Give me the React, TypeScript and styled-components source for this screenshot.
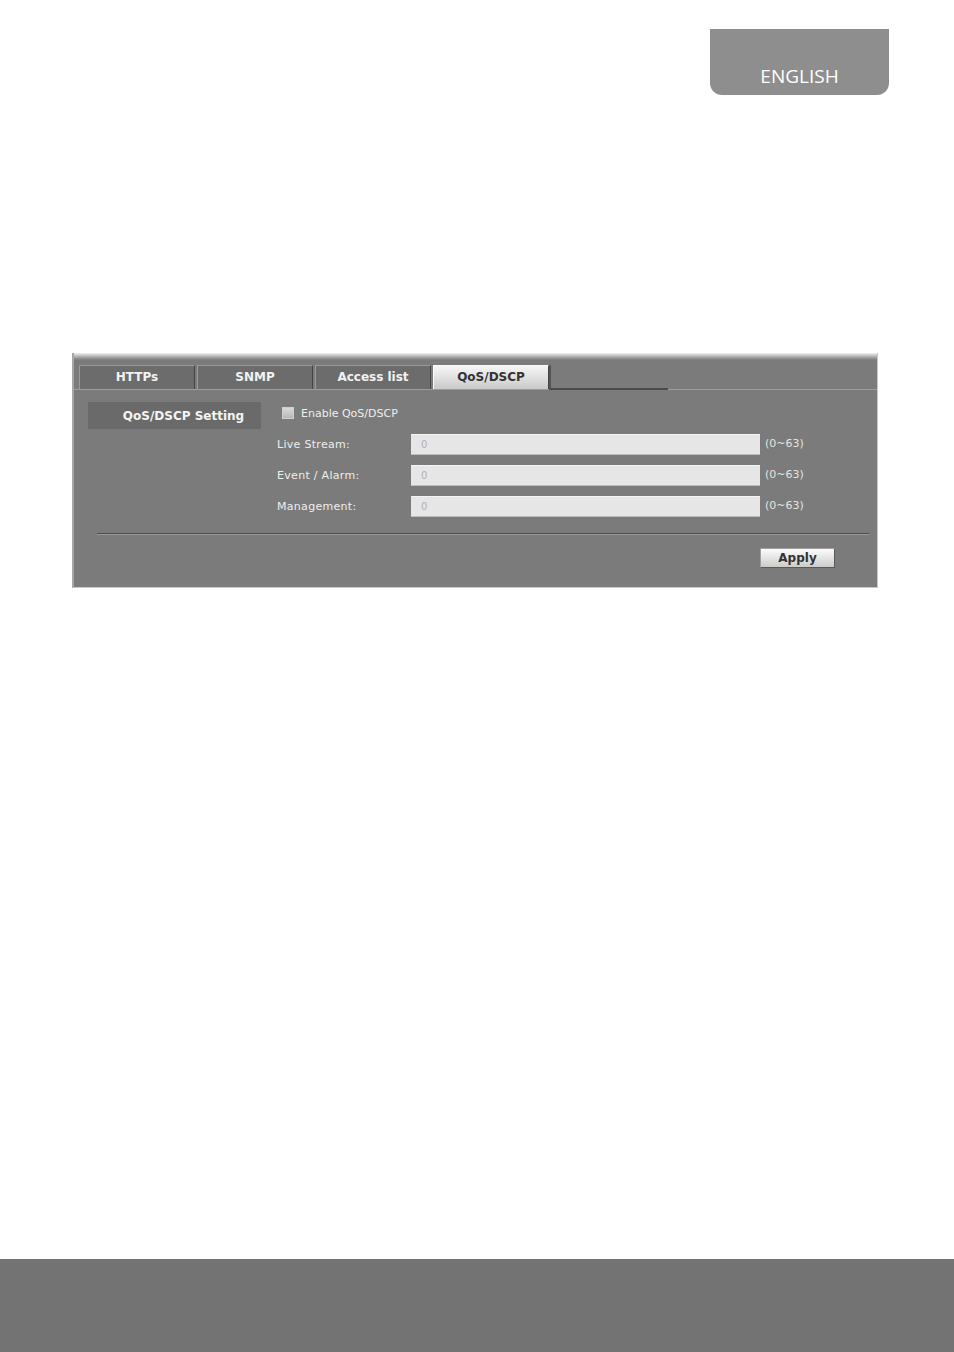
import React, { useState } from "react";
import styled, { createGlobalStyle } from "styled-components";

const GlobalStyle = createGlobalStyle`
  html, body {
    margin: 0;
    padding: 0;
    background: #ffffff;
  }
`;

const tabs = ["HTTPs", "SNMP", "Access list", "QoS/DSCP"];

const fields = [
  { label: "Live Stream:", value: "0" },
  { label: "Event / Alarm:", value: "0" },
  { label: "Management:", value: "0" },
];

const App = () => {
  const [active, setActive] = useState("QoS/DSCP");
  const [enabled, setEnabled] = useState(false);

  return (
    <Page>
      <GlobalStyle />
      <Header>
        <LangTab>ENGLISH</LangTab>
      </Header>

      <Panel>
        <TabBar>
          {tabs.map((t) => (
            <Tab key={t} $active={t === active} onClick={() => setActive(t)}>
              {t}
            </Tab>
          ))}
          <TabEnd />
        </TabBar>

        <Body>
          <SectionTitle>QoS/DSCP Setting</SectionTitle>
          <Form>
            <CheckRow>
              <Check
                type="checkbox"
                checked={enabled}
                onChange={(e) => setEnabled(e.target.checked)}
              />
              Enable QoS/DSCP
            </CheckRow>
            {fields.map((f) => (
              <FieldRow key={f.label}>
                <Label>{f.label}</Label>
                <Input defaultValue={f.value} disabled={!enabled} />
                <Range>(0~63)</Range>
              </FieldRow>
            ))}
          </Form>
        </Body>

        <Separator />
        <Actions>
          <ApplyButton>Apply</ApplyButton>
        </Actions>
      </Panel>

      <Footer />
    </Page>
  );
};

const Page = styled.div`
  min-height: 1352px;
  display: flex;
  flex-direction: column;
  background: #ffffff;
`;

const Header = styled.div`
  display: flex;
  justify-content: flex-end;
  padding: 29px 65px 0 0;
`;

const LangTab = styled.div`
  width: 179px;
  height: 66px;
  box-sizing: border-box;
  padding-bottom: 6px;
  background: #8e8e8e;
  border-radius: 0 0 12px 12px;
  display: flex;
  align-items: flex-end;
  justify-content: center;
  color: #ffffff;
  font-family: "Open Sans", "Noto Sans", sans-serif;
  font-size: 19px;
`;

const Panel = styled.div`
  margin: 258px 0 0 72px;
  width: 806px;
  box-sizing: border-box;
  background: linear-gradient(#f2f2f2 0, #a9a9a9 4px, #7b7b7b 7px);
  border-left: 2px solid #a6a6a6;
  border-right: 1px solid #c8c8c8;
  border-bottom: 1px solid #c8c8c8;
  font-family: "DejaVu Sans", Verdana, sans-serif;
  padding-bottom: 19px;
`;

const TabBar = styled.div`
  display: flex;
  gap: 2px;
  padding: 12px 0 0 5px;
  border-bottom: 1px solid #9c9c9c;
`;

const Tab = styled.button<{ $active?: boolean }>`
  width: 116px;
  height: 24px;
  padding: 0 0 2px;
  border: 0;
  border-top: 1px solid ${(p) => (p.$active ? "#fafafa" : "#9a9a9a")};
  border-left: 1px solid ${(p) => (p.$active ? "#fafafa" : "#9a9a9a")};
  border-right: 1px solid #444444;
  background: ${(p) =>
    p.$active
      ? "linear-gradient(#f6f6f6, #dcdcdc 60%, #c9c9c9)"
      : "#6c6c6c"};
  color: ${(p) => (p.$active ? "#333333" : "#f2f2f2")};
  font-family: "DejaVu Sans", Verdana, sans-serif;
  font-weight: bold;
  font-size: 12px;
  cursor: pointer;
`;

const TabEnd = styled.div`
  width: 117px;
  margin-left: -2px;
  border-left: 2px solid #555555;
  border-bottom: 2px solid #4a4a4a;
  margin-bottom: -1px;
`;

const Body = styled.div`
  display: flex;
  gap: 16px;
  padding: 12px 0 0 14px;
`;

const SectionTitle = styled.div`
  width: 173px;
  height: 27px;
  box-sizing: border-box;
  padding-left: 18px;
  background: #6a6a6a;
  display: flex;
  align-items: center;
  justify-content: center;
  color: #f4f4f4;
  font-weight: bold;
  font-size: 12px;
  flex-shrink: 0;
`;

const Form = styled.div`
  display: flex;
  flex-direction: column;
  gap: 10px;
  padding-top: 5px;
`;

const CheckRow = styled.label`
  display: flex;
  align-items: center;
  gap: 7px;
  height: 12px;
  margin-left: 5px;
  margin-bottom: 5px;
  color: #eeeeee;
  font-size: 11px;
`;

const Check = styled.input`
  appearance: none;
  width: 12px;
  height: 12px;
  margin: 0;
  background: linear-gradient(#d8d8d8, #b8b8b8);
  border: 1px solid #cfcfcf;
  box-sizing: border-box;
  &:checked {
    background: #e8e8e8;
  }
`;

const FieldRow = styled.div`
  display: flex;
  align-items: center;
  height: 21px;
`;

const Label = styled.div`
  width: 134px;
  color: #eeeeee;
  font-size: 11px;
  letter-spacing: 0.3px;
`;

const Input = styled.input`
  width: 349px;
  height: 21px;
  box-sizing: border-box;
  padding: 0 10px;
  border: 0;
  border-top: 1px solid #f4f4f4;
  border-bottom: 1px solid #bdbdbd;
  background: #e6e6e6;
  color: #b0b0b0;
  font-family: "DejaVu Sans", Verdana, sans-serif;
  font-size: 10px;
  &:disabled {
    color: #b0b0b0;
    background: #e6e6e6;
  }
`;

const Range = styled.div`
  margin-left: 5px;
  color: #e4e4e4;
  font-size: 11px;
  margin-top: -2px;
`;

const Separator = styled.div`
  margin: 16px 8px 0 23px;
  height: 1px;
  background: #4c4c4c;
  border-bottom: 1px solid #9a9a9a;
`;

const Actions = styled.div`
  display: flex;
  justify-content: flex-end;
  padding: 13px 42px 0 0;
`;

const ApplyButton = styled.button`
  width: 75px;
  height: 20px;
  padding: 0;
  border: 1px solid #a0a0a0;
  border-right-color: #5a5a5a;
  border-bottom-color: #5a5a5a;
  background: linear-gradient(#fbfbfb, #e2e2e2 55%, #cbcbcb);
  color: #333333;
  font-family: "DejaVu Sans", Verdana, sans-serif;
  font-weight: bold;
  font-size: 12px;
  cursor: pointer;
`;

const Footer = styled.div`
  margin-top: auto;
  height: 93px;
  background: #737373;
`;

export default App;
